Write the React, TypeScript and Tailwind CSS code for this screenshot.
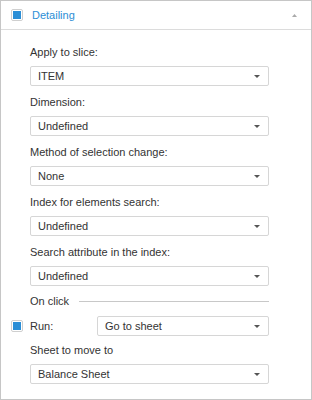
const font = { fontFamily: '"Liberation Sans", Arial, sans-serif' }

function Check() {
  return (
    <span className="flex h-[12px] w-[12px] items-center justify-center rounded-[2px] border border-[#cfcfcf] bg-white">
      <span className="h-[8px] w-[8px] bg-[#2b8ed6]" />
    </span>
  )
}

function Caret() {
  return (
    <svg width="6" height="3" viewBox="0 0 6 3" className="shrink-0">
      <path d="M0 0h6L3 3z" fill="#555" />
    </svg>
  )
}

function Select({ value, className = '' }: { value: string; className?: string }) {
  return (
    <div
      className={`flex h-[20px] items-center justify-between rounded-[2px] border border-[#d6d6d6] bg-white pl-[7px] pr-[8px] text-[11px] text-[#333] ${className}`}
    >
      <span className="leading-none">{value}</span>
      <Caret />
    </div>
  )
}

const fields = [
  { label: 'Apply to slice:', value: 'ITEM' },
  { label: 'Dimension:', value: 'Undefined' },
  { label: 'Method of selection change:', value: 'None' },
  { label: 'Index for elements search:', value: 'Undefined' },
  { label: 'Search attribute in the index:', value: 'Undefined' },
]

export default function App() {
  return (
    <div className="h-[400px] w-[312px] border border-[#c6c6c6] bg-white text-[11px] text-[#333]" style={font}>
      <div className="flex h-[29px] items-center border-b border-[#dcdcdc] pl-[10px] pr-[14px]">
        <Check />
        <span className="ml-[9px] text-[11px] text-[#2b8ed6]">Detailing</span>
        <svg width="5" height="3" viewBox="0 0 5 3" className="ml-auto">
          <path d="M0 3h5L2.5 0z" fill="#aaa" />
        </svg>
      </div>

      <div className="pl-[29px] pr-[42px] pt-[14px]">
        {fields.map((f) => (
          <div key={f.label} className="mb-[8px]">
            <div className="mb-[6px] h-[16px] leading-[16px]">{f.label}</div>
            <Select value={f.value} />
          </div>
        ))}

        <div className="-mt-[1px] flex h-[16px] items-center">
          <span className="leading-[16px]">On click</span>
          <span className="ml-[10px] h-px flex-1 bg-[#c8c8c8]" />
        </div>

        <div className="-ml-[19px] mt-[7px] flex items-center">
          <Check />
          <span className="ml-[7px] w-[67px]">Run:</span>
          <Select value="Go to sheet" className="flex-1" />
        </div>

        <div className="mb-[6px] mt-[6px] h-[16px] leading-[16px]">Sheet to move to</div>
        <Select value="Balance Sheet" />
      </div>
    </div>
  )
}
